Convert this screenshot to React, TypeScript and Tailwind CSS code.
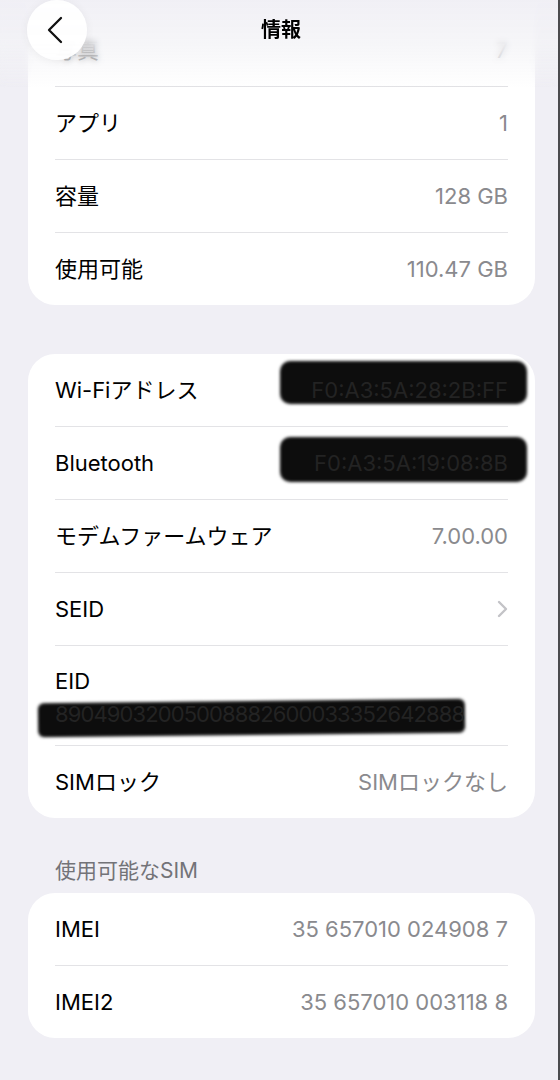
import React from "react";

type Row = { label: string; value?: string; chevron?: boolean; redacted?: "wifi" | "bt" };

const font = "font-['Inter','Noto_Sans_CJK_JP',sans-serif]";

const Separator = () => <div className="h-px bg-[#e3e3e6]" />;

const Chevron = () => (
  <svg width="11" height="18" viewBox="0 0 11 18" fill="none">
    <path d="M2 2l7 7-7 7" stroke="#c3c3c7" strokeWidth="2.4" strokeLinecap="round" strokeLinejoin="round" />
  </svg>
);

const Redacted = ({ value, kind }: { value: string; kind: "wifi" | "bt" }) => (
  <span className="relative inline-block">
    <span
      className={
        kind === "wifi"
          ? "absolute right-[-19px] top-[-15px] h-[43px] w-[247px] rounded-[10px] bg-[#0d0d0d] blur-[1.5px]"
          : "absolute right-[-19px] top-[-12px] h-[45px] w-[247px] rounded-[10px] bg-[#0d0d0d] blur-[1.5px]"
      }
    />
    <span className="relative text-[#232323]">{value}</span>
  </span>
);

const ListRow = ({ row }: { row: Row }) => (
  <div className="flex h-[72px] items-center justify-between">
    <span className="text-black">{row.label}</span>
    {row.chevron ? (
      <Chevron />
    ) : row.redacted ? (
      <Redacted value={row.value ?? ""} kind={row.redacted} />
    ) : (
      <span className="text-[#8a8a8e]">{row.value}</span>
    )}
  </div>
);

const Card = ({ children, className = "" }: { children: React.ReactNode; className?: string }) => (
  <div className={`rounded-[27px] bg-white px-[27px] ${className}`}>{children}</div>
);

const storage: Row[] = [
  { label: "写真", value: "7" },
  { label: "アプリ", value: "1" },
  { label: "容量", value: "128 GB" },
  { label: "使用可能", value: "110.47 GB" },
];

const network: Row[] = [
  { label: "Wi-Fiアドレス", value: "F0:A3:5A:28:2B:FF", redacted: "wifi" },
  { label: "Bluetooth", value: "F0:A3:5A:19:08:8B", redacted: "bt" },
  { label: "モデムファームウェア", value: "7.00.00" },
  { label: "SEID", chevron: true },
];

const sims: Row[] = [
  { label: "IMEI", value: "35 657010 024908 7" },
  { label: "IMEI2", value: "35 657010 003118 8" },
];

export default function App() {
  return (
    <div className={`relative h-[1080px] w-[560px] overflow-hidden border-r-2 border-[#4b4b4e] bg-[#f0eff5] text-[22px] leading-[28px] ${font}`}>
      <div className="pl-[28px] pr-[23px]">
        {/* list scrolled up: the card's top lies under the header */}
        <Card className="-mt-[59px] pt-[73px]">
          {storage.map((r, i) => (
            <div key={r.label}>
              {i > 0 && <Separator />}
              <ListRow row={r} />
            </div>
          ))}
        </Card>

        <Card className="mt-[49px]">
          {network.map((r, i) => (
            <div key={r.label}>
              {i > 0 && <Separator />}
              <ListRow row={r} />
            </div>
          ))}
          <Separator />
          <div className="h-[99px] pt-[21px]">
            <div className="text-black">EID</div>
            <div className="relative mt-[5px] inline-block">
              <span className="absolute -left-[17px] top-[1px] h-[34px] w-[427px] -rotate-[0.6deg] rounded-[6px] bg-[#0d0d0d] blur-[1.5px]" />
              <span className="relative text-[#232323] tracking-[-0.9px]">89049032005008882600033352642888</span>
            </div>
          </div>
          <Separator />
          <ListRow row={{ label: "SIMロック", value: "SIMロックなし" }} />
        </Card>

        <div className="mt-[39px] mb-[8px] pl-[27px] text-[21px] leading-[28px] text-[#737378]">使用可能なSIM</div>

        <Card>
          {sims.map((r, i) => (
            <div key={r.label}>
              {i > 0 && <Separator />}
              <ListRow row={r} />
            </div>
          ))}
        </Card>
      </div>

      {/* frosted header */}
      <div className="absolute inset-x-0 top-0 h-[88px] backdrop-blur-[3px] [mask-image:linear-gradient(to_bottom,black_45%,transparent)]" />
      <div className="absolute inset-x-0 top-0 h-[88px] bg-gradient-to-b from-[#f0eff5]/95 via-[#f3f3f6]/75 to-transparent" />
      <div className="absolute inset-x-0 top-0 flex h-[60px] items-center justify-center">
        <span className="pl-[4px] text-[20px] font-bold text-black">情報</span>
      </div>
      <button className="absolute left-[27px] top-0 flex h-[60px] w-[60px] items-center justify-center rounded-full bg-white/95 shadow-[0_1px_10px_rgba(0,0,0,0.06)]">
        <svg width="16" height="28" viewBox="0 0 16 28" fill="none" className="-ml-[4px]">
          <path d="M14 2L2 14l12 12" stroke="#111" strokeWidth="2.3" strokeLinecap="round" strokeLinejoin="round" />
        </svg>
      </button>
    </div>
  );
}
